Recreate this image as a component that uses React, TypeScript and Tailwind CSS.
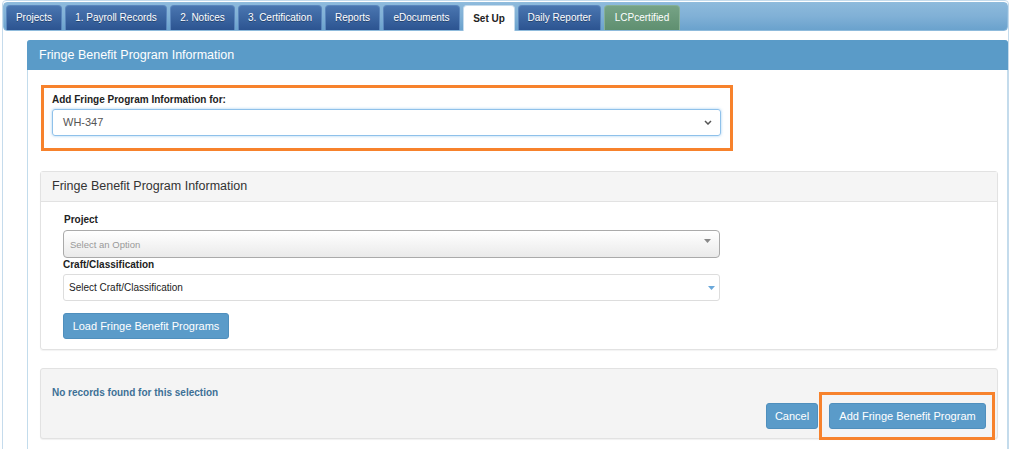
import React from "react";

// tab strip items, widths read off the screen
const tabs = [
  { label: "Projects", w: "w-[56px]" },
  { label: "1. Payroll Records", w: "w-[102px]" },
  { label: "2. Notices", w: "w-[65px]" },
  { label: "3. Certification", w: "w-[84px]" },
  { label: "Reports", w: "w-[55px]" },
  { label: "eDocuments", w: "w-[77px]" },
  { label: "Set Up", w: "w-[52px]", active: true },
  { label: "Daily Reporter", w: "w-[83px]" },
  { label: "LCPcertified", w: "w-[76px]", green: true },
];

function Tab({ label, w, active, green }: { label: string; w: string; active?: boolean; green?: boolean }) {
  let cls =
    "bg-gradient-to-b from-[#4a76b0] to-[#2c5491] border-[#5a86bd] text-white [text-shadow:0_1px_0_rgba(0,0,0,0.35)]";
  if (active) cls = "bg-white border-[#c5dbec] text-[#222] font-bold h-[26px] -mb-[1px]";
  if (green) cls = "bg-gradient-to-b from-[#76a386] to-[#5f8f70] border-[#86b096] text-white";
  return (
    <div
      className={`${w} h-[25px] flex items-center justify-center rounded-t-[4px] border border-b-0 text-[10px] leading-none ${cls}`}
    >
      {label}
    </div>
  );
}

function Chevron() {
  return (
    <svg width="8" height="5" viewBox="0 0 8 5">
      <path d="M1 1 L4 4 L7 1" fill="none" stroke="#555" strokeWidth="1.5" />
    </svg>
  );
}

function Triangle({ color }: { color: string }) {
  return (
    <svg width="7" height="4" viewBox="0 0 7 4">
      <path d="M0 0 L7 0 L3.5 4 Z" fill={color} />
    </svg>
  );
}

export default function App() {
  return (
    <div className="w-[1010px] h-[449px] overflow-hidden bg-white font-['Liberation_Sans',Arial,sans-serif]">
      <div className="ml-[2px] mr-[1px] h-[460px] border border-[#c5dbec] rounded-t-[4px]">
        {/* tab strip */}
        <div className="h-[29px] mt-[1px] px-[2px] pt-[3px] flex items-end gap-[3px] rounded-[4px] border border-[#8fbbdc] bg-gradient-to-b from-[#8dbadc] via-[#80b0d6] to-[#6aa2cd]">
          {tabs.map((t) => (
            <Tab key={t.label} {...t} />
          ))}
        </div>

        {/* main panel */}
        <div className="ml-[24px] mt-[9px] border border-[#c3dcec] rounded-t-[3px] h-[420px]">
          <div className="h-[30px] bg-[#5a9bc8] flex items-center pl-[12px] text-white text-[12.5px] -mt-[1px] -mx-[1px] rounded-t-[3px]">
            Fringe Benefit Program Information
          </div>

          <div className="pl-[12px] pr-[9px]">
            {/* highlighted selector */}
            <div className="mt-[15px] ml-[1px] w-[692px] border-[3px] border-[#f7822c] pt-[6px] pl-[8px] pr-[9px] pb-[12px]">
              <div className="text-[10px] font-bold text-[#222] leading-[12px] mb-[3px]">
                Add Fringe Program Information for:
              </div>
              <div className="h-[27px] rounded-[3px] border border-[#8fc1ea] shadow-[0_0_3px_rgba(102,175,233,0.6)] flex items-center justify-between pl-[10px] pr-[8px] text-[11px] text-[#555]">
                <span>WH-347</span>
                <Chevron />
              </div>
            </div>

            {/* filter panel */}
            <div className="mt-[20px] border border-[#e2e2e2] rounded-[3px] shadow-[0_1px_1px_rgba(0,0,0,0.05)]">
              <div className="h-[30px] bg-[#f5f5f5] border-b border-[#e2e2e2] flex items-center pl-[11px] text-[12.5px] text-[#333]">
                Fringe Benefit Program Information
              </div>
              <div className="pl-[22px] pt-[12px] pb-[10px]">
                <div className="text-[10px] font-bold text-[#222] leading-[12px] pl-[1px]">Project</div>
                <div className="mt-[4px] w-[657px] h-[28px] rounded-[4px] border border-[#aaa] bg-gradient-to-b from-white to-[#eaeaea] flex items-center justify-between pl-[6px] pr-[8px] text-[9.5px] text-[#999]">
                  <span className="mt-[2px]">Select an Option</span>
                  <span className="-mt-[6px]">
                    <Triangle color="#888" />
                  </span>
                </div>
                <div className="text-[10px] font-bold text-[#222] leading-[12px] mt-[1px]">Craft/Classification</div>
                <div className="mt-[3px] w-[657px] h-[27px] rounded-[3px] border border-[#ddd] bg-white flex items-center justify-between pl-[5px] pr-[4px] text-[10px] text-[#222]">
                  <span>Select Craft/Classification</span>
                  <Triangle color="#6aa8da" />
                </div>
                <button className="mt-[12px] h-[26px] w-[166px] rounded-[3px] bg-[#5a9bc9] border border-[#4f8fbd] text-white text-[11px]">
                  Load Fringe Benefit Programs
                </button>
              </div>
            </div>

            {/* results panel */}
            <div className="mt-[18px] h-[71px] border border-[#e2e2e2] rounded-[3px] bg-[#f4f4f4] shadow-[0_1px_1px_rgba(0,0,0,0.06)] pl-[11px] pr-[11px] pt-[18px]">
              <div className="text-[10px] font-bold text-[#3d7096] leading-[12px]">No records found for this selection</div>
              <div className="mt-[4px] flex justify-end items-center gap-[11px]">
                <button className="h-[26px] w-[52px] rounded-[3px] bg-[#5a9bc9] border border-[#4f8fbd] text-white text-[11px]">
                  Cancel
                </button>
                <div className="relative">
                  <button className="h-[26px] w-[157px] rounded-[3px] bg-[#5a9bc9] border border-[#4f8fbd] text-white text-[11px]">
                    Add Fringe Benefit Program
                  </button>
                  <div className="absolute -left-[10px] -right-[9px] -top-[11px] -bottom-[11px] border-[3px] border-[#f7822c] pointer-events-none" />
                </div>
              </div>
            </div>
          </div>
        </div>
      </div>
    </div>
  );
}
